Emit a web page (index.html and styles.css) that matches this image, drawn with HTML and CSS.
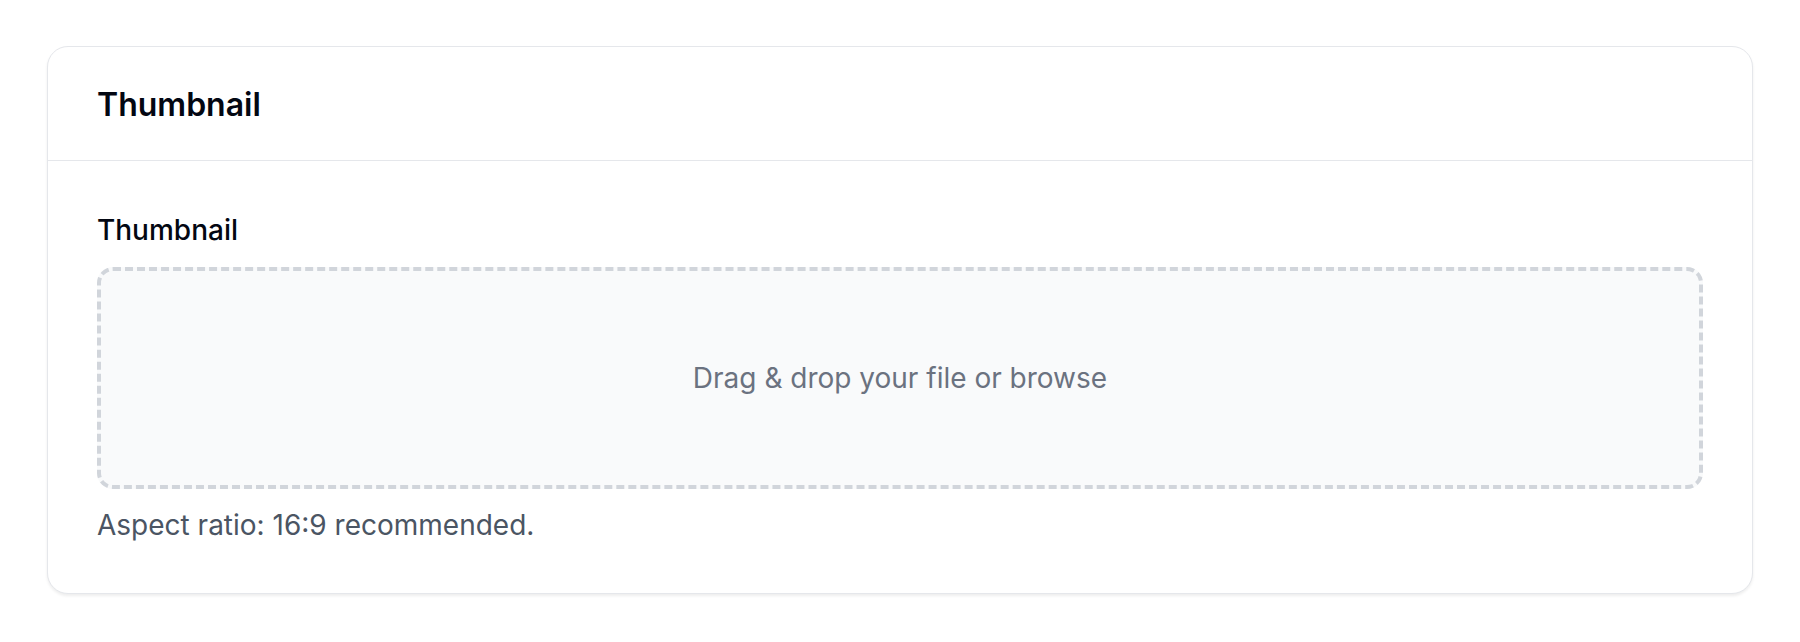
FILE: index.html
```html
<!DOCTYPE html>
<html lang="en">
<head>
    <meta charset="UTF-8">
    <meta name="viewport" content="width=device-width, initial-scale=1.0">
    <title>Thumbnail</title>
    <link rel="stylesheet" href="styles.css">
</head>
<body>
    <div class="page">
        <div class="card">
            <div class="card-header">
                <h2 class="card-title">Thumbnail</h2>
            </div>
            <div class="card-body">
                <label class="field-label" for="thumbnail">Thumbnail</label>
                <div class="dropzone">
                    <input type="file" id="thumbnail" class="file-input">
                    <span class="dropzone-text">Drag &amp; drop your file or browse</span>
                </div>
                <p class="helper">Aspect ratio: 16:9 recommended.</p>
            </div>
        </div>
    </div>
</body>
</html>
```

FILE: styles.css
```css
body {
    margin: 0;
    background: #fff;
    font-family: Inter, "Noto Sans", Arial, sans-serif;
    color: #030712;
}
.page {
    padding: 46px 47px;
}
.card {
    background: #fff;
    border: 1px solid #e5e7eb;
    border-radius: 21px;
    box-shadow: 0 2px 3px rgba(0, 0, 0, 0.07);
}
.card-header {
    padding: 34px 49px 31px;
    border-bottom: 1px solid #e5e7eb;
}
.card-title {
    margin: 0;
    font-size: 32px;
    line-height: 48px;
    font-weight: 600;
}
.card-body {
    padding: 48px 49px 47px;
}
.field-label {
    display: block;
    font-size: 28px;
    line-height: 42px;
    font-weight: 500;
    margin-bottom: 16px;
}
.dropzone {
    height: 222px;
    box-sizing: border-box;
    border: 4px dashed #d1d5db;
    border-radius: 16px;
    background: #f9fafb;
    display: flex;
    align-items: center;
    justify-content: center;
}
.file-input {
    display: none;
}
.dropzone-text {
    font-size: 28px;
    color: #6b7280;
}
.helper {
    margin: 15px 0 0;
    font-size: 28px;
    line-height: 42px;
    color: #4b5563;
}
```
